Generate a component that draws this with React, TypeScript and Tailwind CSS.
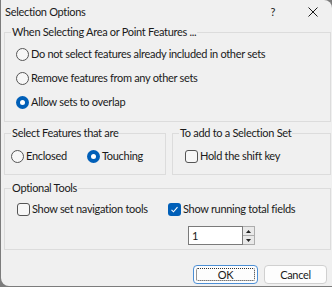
import React from "react"

const font = "font-['Lato','Liberation_Sans',sans-serif]"

function Radio({ checked, label }: { checked?: boolean; label: string }) {
  return (
    <div className="flex items-center gap-[2px] whitespace-nowrap">
      {checked ? (
        <span className="flex w-[13px] h-[13px] items-center justify-center rounded-full bg-[#005fb8]">
          <span className="w-[5px] h-[5px] rounded-full bg-white" />
        </span>
      ) : (
        <span className="w-[13px] h-[13px] rounded-full border border-[#555] bg-[#f7f7f7]" />
      )}
      <span>{label}</span>
    </div>
  )
}

function Check({ checked, label }: { checked?: boolean; label: string }) {
  return (
    <div className="flex items-center gap-[2px] whitespace-nowrap">
      {checked ? (
        <span className="flex w-[13px] h-[13px] items-center justify-center rounded-[3px] bg-[#005fb8]">
          <svg width="9" height="9" viewBox="0 0 9 9">
            <path d="M1.5 4.8 L3.5 6.8 L7.5 2.2" fill="none" stroke="white" strokeWidth="1.1" />
          </svg>
        </span>
      ) : (
        <span className="w-[13px] h-[13px] rounded-[3px] border border-[#555] bg-[#f7f7f7]" />
      )}
      <span>{label}</span>
    </div>
  )
}

function Group({
  title,
  className,
  inner,
  children,
}: {
  title: string
  className?: string
  inner?: string
  children: React.ReactNode
}) {
  return (
    <fieldset className={"min-w-0 border border-[#dcdcdc] " + (className ?? "")}>
      <legend className="ml-[6px] px-[1px] leading-[16px] whitespace-nowrap">{title}</legend>
      <div className={inner}>{children}</div>
    </fieldset>
  )
}

export default function App() {
  return (
    <div className={"w-[332px] h-[287px] overflow-hidden bg-[#7c7c7c] text-[11px] leading-[16px] tracking-[-0.3px] text-[#1a1a1a] " + font}>
      <div className="ml-[1px] w-[331px] h-[286px] bg-[#f0f0f0] rounded-tr-[8px] rounded-bl-[8px] flex flex-col">
        <div className="h-[24px] shrink-0 flex items-center pl-[4px]">
          <span>Selection Options</span>
          <span className="ml-auto mr-[33px]">?</span>
          <svg className="mr-[14px]" width="10" height="10" viewBox="0 0 10 10">
            <path d="M0.5 0.5 L9.5 9.5 M9.5 0.5 L0.5 9.5" stroke="#1a1a1a" strokeWidth="1" />
          </svg>
        </div>

        <div className="pl-[3px] pr-[1px] flex flex-col">
          <Group title="When Selecting Area or Point Features ..." inner="pl-[11px] pt-[2px] pb-[7px]">
            <div className="h-[24px] flex items-center">
              <Radio label="Do not select features already included in other sets" />
            </div>
            <div className="h-[24px] flex items-center">
              <Radio label="Remove features from any other sets" />
            </div>
            <div className="h-[24px] flex items-center">
              <Radio checked label="Allow sets to overlap" />
            </div>
          </Group>

          <div className="flex gap-[6px] mt-[3px]">
            <Group title="Select Features that are" className="w-[162px] shrink-0" inner="pl-[6px] pt-[3px] pb-[6px]">
              <div className="h-[24px] flex items-center">
                <div className="w-[76px]">
                  <Radio label="Enclosed" />
                </div>
                <Radio checked label="Touching" />
              </div>
            </Group>
            <Group title="To add to a Selection Set" className="flex-1" inner="pl-[12px] pt-[3px] pb-[6px]">
              <div className="h-[24px] flex items-center">
                <Check label="Hold the shift key" />
              </div>
            </Group>
          </div>

          <Group title="Optional Tools" className="mt-[5px]" inner="pl-[12px] pt-[3px] pb-[4px]">
            <div className="flex">
              <div className="w-[151px] shrink-0 h-[20px] flex items-center">
                <Check label="Show set navigation tools" />
              </div>
              <div className="flex flex-col">
                <div className="h-[20px] flex items-center">
                  <Check checked label="Show running total fields" />
                </div>
                <div className="ml-[20px] mt-[7px] flex h-[19px]">
                  <div className="w-[55px] h-full bg-white border border-[#7a7a7a] flex items-center pl-[3px]">1</div>
                  <div className="w-[12px] h-full flex flex-col border border-l-0 border-[#adadad] bg-[#e9e9e9]">
                    <div className="flex-1 flex items-center justify-center border-b border-[#adadad]">
                      <svg width="5" height="3" viewBox="0 0 5 3"><path d="M0 3 L2.5 0 L5 3 Z" fill="#222" /></svg>
                    </div>
                    <div className="flex-1 flex items-center justify-center">
                      <svg width="5" height="3" viewBox="0 0 5 3"><path d="M0 0 L2.5 3 L5 0 Z" fill="#222" /></svg>
                    </div>
                  </div>
                </div>
              </div>
            </div>
          </Group>

          <div className="mt-[15px] flex justify-end gap-[6px] pr-[4px]">
            <button className="w-[65px] h-[19px] rounded-[4px] border border-[#4c8fd6] bg-[#fdfdfd] p-[2px]">
              <span className="flex h-full w-full items-center justify-center border border-dotted border-[#333] rounded-[2px]">OK</span>
            </button>
            <button className="w-[63px] h-[19px] rounded-[4px] border border-[#d0d0d0] bg-[#fdfdfd] flex items-center justify-center">
              Cancel
            </button>
          </div>
        </div>
      </div>
    </div>
  )
}
